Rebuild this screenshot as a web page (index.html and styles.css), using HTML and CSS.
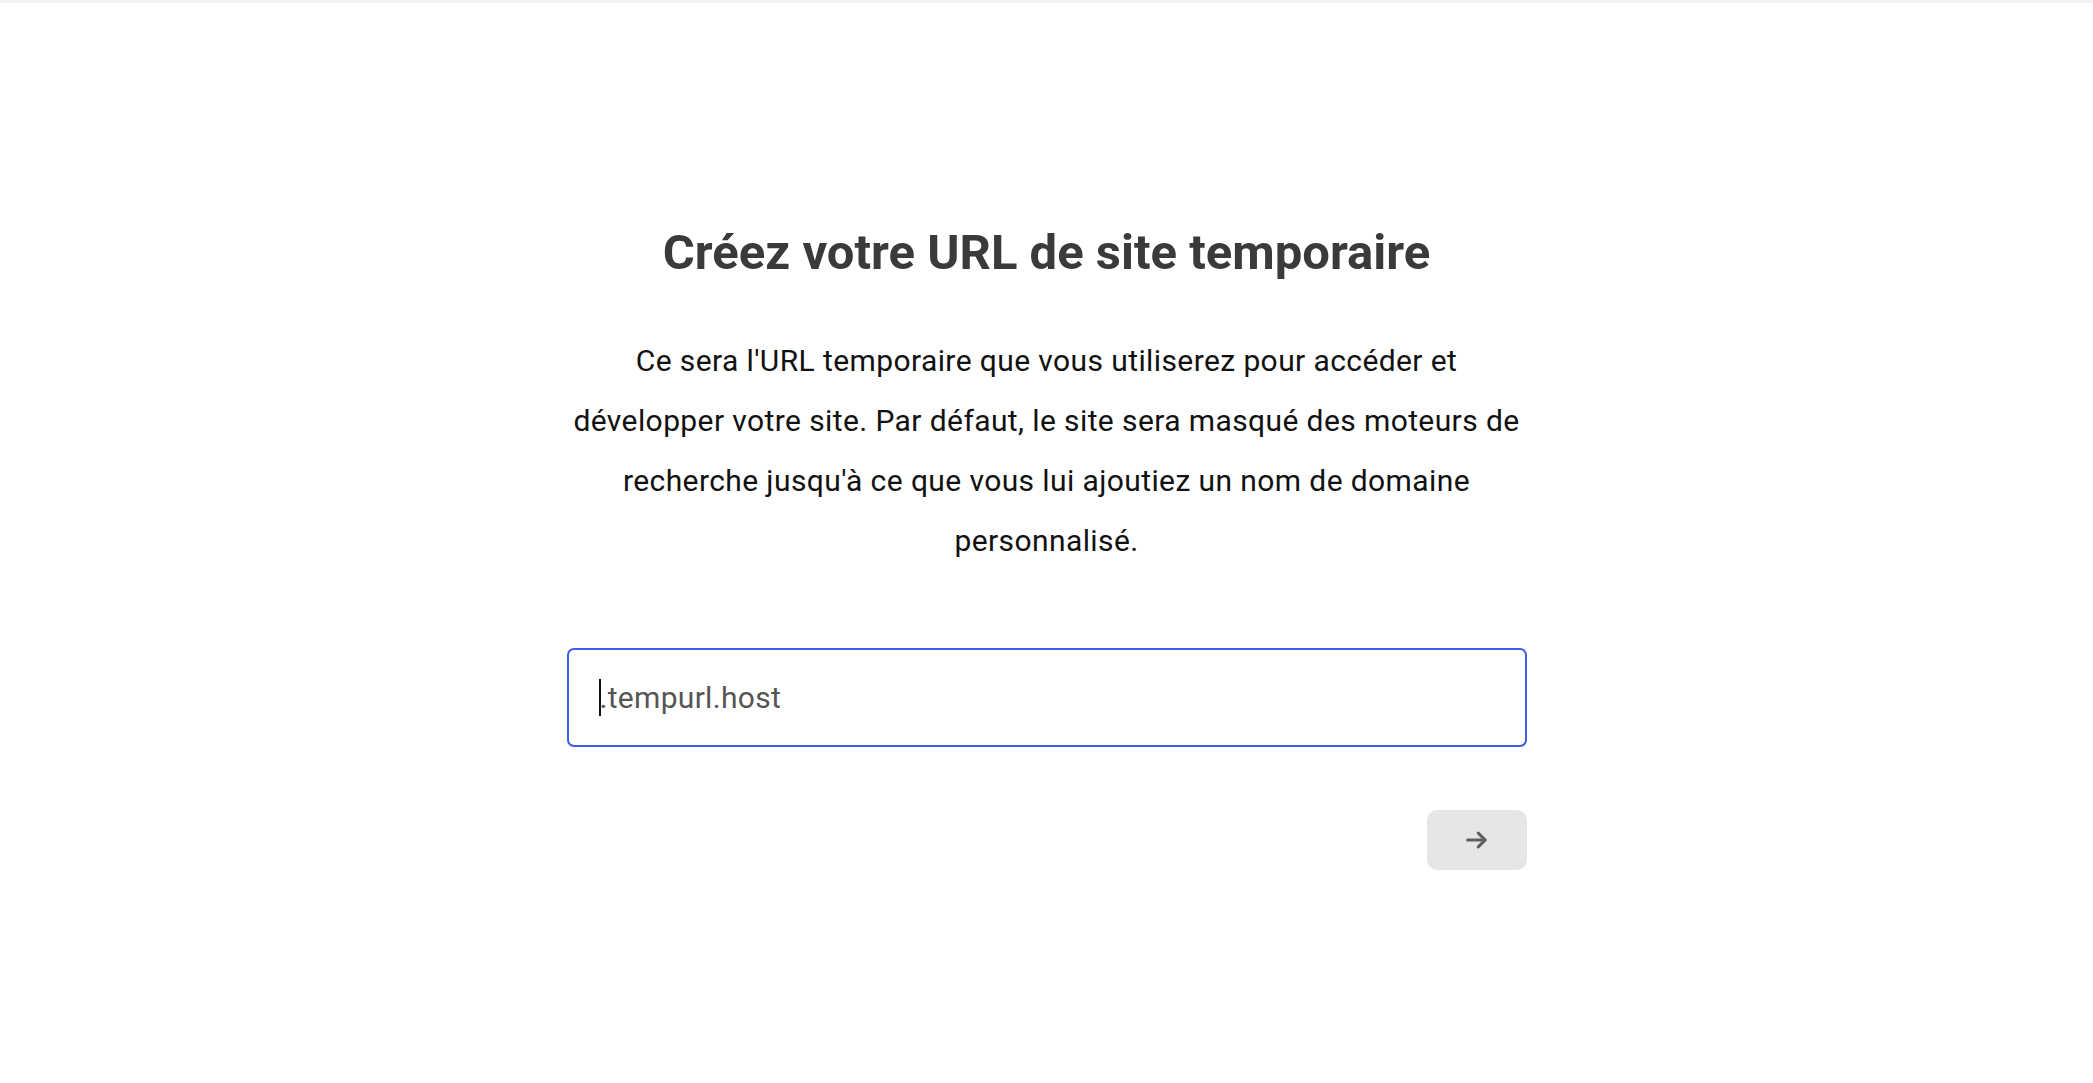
FILE: index.html
```html
<!DOCTYPE html>
<html lang="fr">

<head>
    <meta charset="utf-8">
    <title>URL de site temporaire</title>
    <link rel="stylesheet" href="styles.css">
</head>

<body>
    <div class="topbar"></div>
    <main class="setup">
        <h1 class="setup-title">Créez votre URL de site temporaire</h1>
        <p class="setup-text">Ce sera l'URL temporaire que vous utiliserez pour accéder et développer votre site. Par défaut, le site sera masqué des moteurs de recherche jusqu'à ce que vous lui ajoutiez un nom de domaine personnalisé.</p>

        <div class="url-field">
            <span class="caret"></span><span class="suffix">.tempurl.host</span>
        </div>

        <div class="actions">
            <button class="next-btn" type="button" aria-label="Suivant">
                <svg width="30" height="30" viewBox="0 0 24 24" fill="none" stroke="#5f5f5f" stroke-width="2.4" stroke-linecap="round" stroke-linejoin="round">
                    <path d="M4.5 12h14"/>
                    <path d="M13 6.5l5.5 5.5-5.5 5.5"/>
                </svg>
            </button>
        </div>
    </main>
</body>

</html>
```

FILE: styles.css
```css
body {
    margin: 0;
    background: #fff;
    font-family: Roboto, "Liberation Sans", Arial, sans-serif;
}

.topbar {
    height: 3px;
    background: #f1f1f1;
}

.setup {
    width: 960px;
    margin: 0 auto;
    padding-top: 222px;
}

.setup-title {
    margin: 0;
    font-size: 49px;
    line-height: 56px;
    font-weight: 700;
    color: #3a3a3a;
    text-align: center;
}

.setup-text {
    margin: 50px 0 0;
    padding: 0 6px;
    font-size: 30px;
    line-height: 60px;
    letter-spacing: 0.4px;
    color: #111;
    text-align: center;
}

.url-field {
    box-sizing: border-box;
    margin-top: 77px;
    height: 99px;
    border: 2px solid #3d5ce8;
    border-radius: 7px;
    padding: 0 30px;
    display: flex;
    align-items: center;
}

.caret {
    width: 2px;
    height: 37px;
    background: #111;
}

.suffix {
    font-size: 30px;
    letter-spacing: 0.3px;
    color: #555;
    margin-left: -1px;
}

.actions {
    display: flex;
    justify-content: flex-end;
    margin-top: 63px;
}

.next-btn {
    width: 100px;
    height: 60px;
    border: none;
    border-radius: 10px;
    background: #e6e6e6;
    display: flex;
    align-items: center;
    justify-content: center;
    padding: 0;
    cursor: pointer;
}
```
